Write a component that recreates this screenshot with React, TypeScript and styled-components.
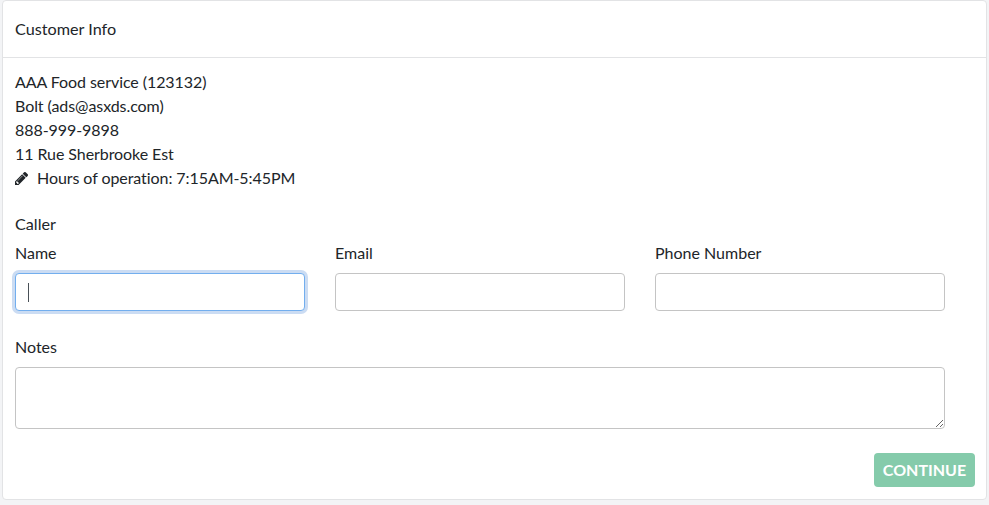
import React from "react";
import styled, { createGlobalStyle } from "styled-components";

const GlobalStyle = createGlobalStyle`
  html, body {
    margin: 0;
    padding: 0;
    background: #f3f4f6;
    font-family: Lato, "Liberation Sans", sans-serif;
    font-size: 16px;
    color: #212529;
  }
  * { box-sizing: border-box; }
`;

const Page = styled.div`
  width: 989px;
  height: 505px;
  padding: 0 2px;
  overflow: hidden;
`;

const Card = styled.section`
  width: 985px;
  height: 500px;
  background: #fff;
  border: 1px solid #e2e3e5;
  border-radius: 4px;
  display: flex;
  flex-direction: column;
`;

const CardHeader = styled.header`
  height: 57px;
  flex: none;
  padding: 0 12px 2px;
  display: flex;
  align-items: center;
  border-bottom: 1px solid #e2e3e5;
  font-size: 16.2px;
`;

const CardBody = styled.div`
  flex: 1;
  padding: 12px 11px 0 12px;
  display: flex;
  flex-direction: column;
`;

const InfoLine = styled.div`
  height: 24px;
  line-height: 24px;
  display: flex;
  align-items: center;
  letter-spacing: -0.07px;
`;

const PencilIcon = styled.svg`
  width: 13px;
  height: 13px;
  margin-right: 9px;
  fill: #212529;
`;

const SectionTitle = styled.div`
  margin-top: 22px;
  height: 24px;
  line-height: 24px;
  font-size: 16.2px;
`;

const FieldRow = styled.div`
  margin-top: 5px;
  display: grid;
  grid-template-columns: repeat(3, 290px);
  column-gap: 30px;
`;

const Field = styled.label`
  display: block;
`;

const FieldLabel = styled.span`
  display: block;
  height: 24px;
  line-height: 24px;
  margin-bottom: 8px;
`;

const InputWrap = styled.div`
  position: relative;
`;

const TextInput = styled.input`
  display: block;
  width: 100%;
  height: 38px;
  padding: 6px 12px;
  font: inherit;
  color: #495057;
  background: #fff;
  border: 1px solid #c4c4c4;
  border-radius: 4px;
  outline: none;
  caret-color: transparent;
  &:focus {
    border-color: #72aeee;
    box-shadow: 0 0 0 3px #cbdcf3;
  }
`;

// headless shots never catch the native caret, so it is drawn
const Caret = styled.span`
  position: absolute;
  left: 13px;
  top: 10px;
  width: 1px;
  height: 19px;
  background: #495057;
`;

const NotesField = styled(Field)`
  margin-top: 24px;
  width: 930px;
`;

const NotesInput = styled.textarea`
  display: block;
  width: 100%;
  height: 62px;
  padding: 6px 12px;
  font: inherit;
  color: #495057;
  background: #fff;
  border: 1px solid #c4c4c4;
  border-radius: 4px;
  outline: none;
  resize: vertical;
`;

const Actions = styled.div`
  margin-top: 24px;
  display: flex;
  justify-content: flex-end;
`;

const ContinueButton = styled.button`
  height: 34px;
  width: 101px;
  padding: 0 0 2px;
  font: inherit;
  font-weight: 700;
  color: #fff;
  text-transform: uppercase;
  background: #85cbab;
  border: none;
  border-radius: 4px;
`;

const App = () => {
  return (
    <Page>
      <GlobalStyle />
      <Card>
        <CardHeader>Customer Info</CardHeader>
        <CardBody>
          <InfoLine>AAA Food service (123132)</InfoLine>
          <InfoLine>Bolt (ads@asxds.com)</InfoLine>
          <InfoLine>888-999-9898</InfoLine>
          <InfoLine>11 Rue Sherbrooke Est</InfoLine>
          <InfoLine>
            <PencilIcon viewBox="128 149 1515 1515">
              <path d="M491 1536l91-91-235-235-91 91v107h128v128h107zm523-928q0-22-22-22-10 0-17 7l-542 542q-7 7-7 17 0 22 22 22 10 0 17-7l542-542q7-7 7-17zm-54-192l416 416-832 832h-416v-416zm683 96q0 53-37 90l-166 166-416-416 166-165q36-38 90-38 53 0 91 38l235 234q37 39 37 91z" />
            </PencilIcon>
            Hours of operation: 7:15AM-5:45PM
          </InfoLine>
          <SectionTitle>Caller</SectionTitle>
          <FieldRow>
            <Field>
              <FieldLabel>Name</FieldLabel>
              <InputWrap>
                <TextInput type="text" autoFocus />
                <Caret />
              </InputWrap>
            </Field>
            <Field>
              <FieldLabel>Email</FieldLabel>
              <TextInput type="text" />
            </Field>
            <Field>
              <FieldLabel>Phone Number</FieldLabel>
              <TextInput type="text" />
            </Field>
          </FieldRow>
          <NotesField>
            <FieldLabel>Notes</FieldLabel>
            <NotesInput />
          </NotesField>
          <Actions>
            <ContinueButton type="button" disabled>
              Continue
            </ContinueButton>
          </Actions>
        </CardBody>
      </Card>
    </Page>
  );
};

export default App;
